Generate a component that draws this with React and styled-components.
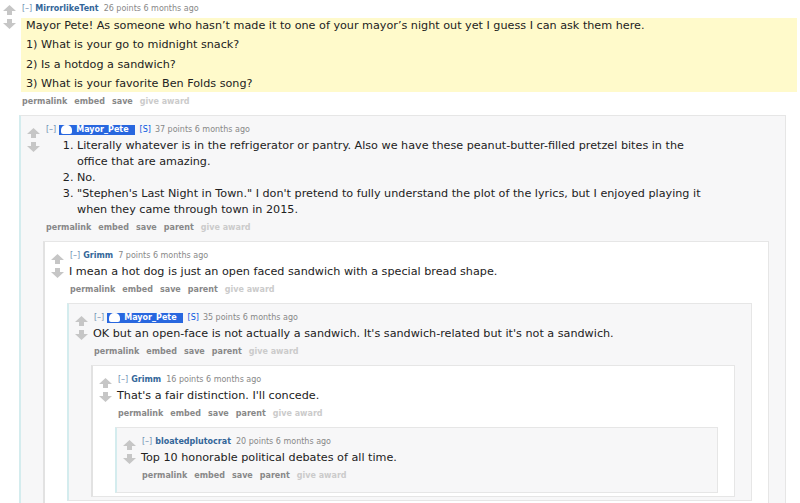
import React from "react";
import styled, { createGlobalStyle } from "styled-components";

const Global = createGlobalStyle`
  html, body { margin: 0; padding: 0; background: #fff; }
  body { font-family: "DejaVu Sans", Verdana, sans-serif; color: #222; overflow: hidden; }
  #root { width: 800px; height: 503px; overflow: hidden; }
`;

const Page = styled.div`
  padding: 4px 3px 0 3px;
`;

const CommentBox = styled.div`
  ${(p) =>
    p.$depth === 0
      ? `background: transparent;`
      : `
    background: ${p.$depth % 2 === 1 ? "#f7f7f8" : "#ffffff"};
    border: 1px solid #e6e6e6;
    border-left: 2px solid ${p.$depth % 2 === 1 ? "#d4ecee" : "#e2e2e2"};
    padding: 9px 5px 3px 6px;
  `}
`;

const Row = styled.div`
  display: flex;
  align-items: flex-start;
`;

const MidCol = styled.div`
  width: 13px;
  margin-right: 5px;
  padding-top: ${(p) => (p.$top ? 1 : 3)}px;
  display: flex;
  flex-direction: column;
  gap: 4px;
  flex-shrink: 0;
`;

const Entry = styled.div`
  flex: 1;
  min-width: 0;
`;

const Tagline = styled.div`
  font-size: 8px;
  line-height: 10px;
  color: #888;
  display: flex;
  align-items: center;
  white-space: nowrap;
  padding-left: 1px;
`;

const Expand = styled.span`
  color: #6f8db2;
  margin-right: 3px;
`;

const Author = styled.span`
  font-weight: bold;
  color: ${(p) => (p.$submitter ? "#fff" : "#336699")};
  background: ${(p) => (p.$submitter ? "#2867df" : "transparent")};
  padding: ${(p) => (p.$submitter ? "0 6px 0 2px" : "0")};
  margin-right: 5px;
  display: inline-flex;
  align-items: center;
  height: 10px;
`;

const Avatar = styled.span`
  display: inline-block;
  width: 11px;
  height: 9px;
  background: #fff;
  border-radius: 5px 5px 2px 2px;
  margin-right: 4px;
`;

const SubTag = styled.span`
  color: #0055df;
  margin-right: 4px;
`;

const Body = styled.div`
  margin-top: ${(p) => (p.$top ? 4 : 3)}px;
  font-size: 11.2px;
  line-height: 16px;
  max-width: ${(p) => (p.$highlight ? "none" : "664px")};
  background: ${(p) => (p.$highlight ? "#fffacb" : "transparent")};
  padding: ${(p) => (p.$highlight ? "0 5px" : "0")};
`;

const Para = styled.p`
  margin: 0 0 3.3px 0;
  &:last-child { margin-bottom: 0; }
`;

const List = styled.ol`
  margin: 0;
  padding-left: 32px;
`;

const Item = styled.li``;

const Buttons = styled.ul`
  list-style: none;
  margin: 5px 0 0 0;
  padding: 0 0 0 1px;
  display: flex;
  gap: 7px;
  font-size: 8px;
  line-height: 10px;
  font-weight: bold;
`;

const Btn = styled.li`
  color: ${(p) => (p.$faint ? "#cbcbcb" : "#888")};
`;

const Children = styled.div`
  margin: 8px 11px 0 16px;
  display: flex;
  flex-direction: column;
  gap: 9px;
`;

const Arrow = ({ down }) => (
  <svg width="13" height="10" viewBox="0 0 13 10" style={{ display: "block" }}>
    <polygon
      fill="#c6c6c6"
      points={
        down
          ? "4,0 9,0 9,4 13,4 6.5,10 0,4 4,4"
          : "6.5,0 13,6 9,6 9,10 4,10 4,6 0,6"
      }
    />
  </svg>
);

const thread = {
  author: "MirrorlikeTent",
  points: "26 points",
  highlight: true,
  body: (
    <>
      <Para>
        Mayor Pete! As someone who hasn’t made it to one of your mayor’s night out yet I guess I can ask them here.
      </Para>
      <Para>1) What is your go to midnight snack?</Para>
      <Para>2) Is a hotdog a sandwich?</Para>
      <Para>3) What is your favorite Ben Folds song?</Para>
    </>
  ),
  noParent: true,
  children: [
    {
      author: "Mayor_Pete",
      submitter: true,
      points: "37 points",
      body: (
        <List>
          <Item>
            Literally whatever is in the refrigerator or pantry. Also we have these peanut-butter-filled pretzel bites in the office that are amazing.
          </Item>
          <Item>No.</Item>
          <Item>
            "Stephen's Last Night in Town." I don't pretend to fully understand the plot of the lyrics, but I enjoyed playing it when they came through town in 2015.
          </Item>
        </List>
      ),
      children: [
        {
          author: "Grimm",
          points: "7 points",
          body: <Para>I mean a hot dog is just an open faced sandwich with a special bread shape.</Para>,
          children: [
            {
              author: "Mayor_Pete",
              submitter: true,
              points: "35 points",
              body: (
                <Para>
                  OK but an open-face is not actually a sandwich. It's sandwich-related but it's not a sandwich.
                </Para>
              ),
              children: [
                {
                  author: "Grimm",
                  points: "16 points",
                  body: <Para>That's a fair distinction. I'll concede.</Para>,
                  children: [
                    {
                      author: "bloatedplutocrat",
                      points: "20 points",
                      body: <Para>Top 10 honorable political debates of all time.</Para>,
                      children: [],
                    },
                  ],
                },
              ],
            },
          ],
        },
      ],
    },
  ],
};

function Comment({ c, depth }) {
  const top = depth === 0;
  return (
    <CommentBox $depth={depth}>
      <Row>
        <MidCol $top={top}>
          <Arrow />
          <Arrow down />
        </MidCol>
        <Entry>
          <Tagline>
            <Expand>[–]</Expand>
            <Author $submitter={c.submitter}>
              {c.submitter && <Avatar />}
              {c.author}
            </Author>
            {c.submitter && <SubTag>[S]</SubTag>}
            {c.points} 6 months ago
          </Tagline>
          <Body $top={top} $highlight={c.highlight}>
            {c.body}
          </Body>
          <Buttons>
            <Btn>permalink</Btn>
            <Btn>embed</Btn>
            <Btn>save</Btn>
            {!c.noParent && <Btn>parent</Btn>}
            <Btn $faint>give award</Btn>
          </Buttons>
        </Entry>
      </Row>
      <Children>
        {c.children.map((ch, i) => (
          <Comment key={i} c={ch} depth={depth + 1} />
        ))}
      </Children>
    </CommentBox>
  );
}

export default function App() {
  return (
    <>
      <Global />
      <Page>
        <Comment c={thread} depth={0} />
      </Page>
    </>
  );
}
